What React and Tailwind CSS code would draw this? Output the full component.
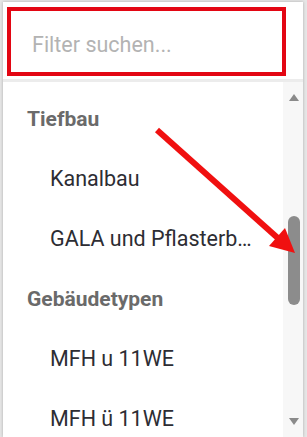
import React from "react";

const items = [
  { type: "group", label: "Tiefbau" },
  { type: "item", label: "Kanalbau" },
  { type: "item", label: "GALA und Pflasterbau" },
  { type: "group", label: "Gebäudetypen" },
  { type: "item", label: "MFH u 11WE" },
  { type: "item", label: "MFH ü 11WE" },
];

export default function App() {
  return (
    <div
      className="relative w-[307px] h-[437px] overflow-hidden bg-[#e6e6e6]"
      style={{ fontFamily: "Roboto, 'Liberation Sans', sans-serif" }}
    >
      <div className="ml-[3px] mt-[2px] w-[300px] h-[435px] bg-white flex flex-col shadow-[0_0_3px_rgba(0,0,0,0.25)]">
        <div className="h-[80px] pt-[5px] pl-[4px] border-b-[3px] border-[#ececec]">
          <div className="w-[279px] h-[69px] border-[4px] border-[#e30613] flex items-center pl-[21px] pt-[6px]">
            <span className="text-[21.5px] text-[#b3b3b3] leading-none">Filter suchen...</span>
          </div>
        </div>
        <div className="flex-1 flex min-h-0">
          <div className="flex-1 pt-[7px] overflow-hidden">
            {items.map((it, i) => (
              <div key={i} className="h-[60px] flex items-center">
                {it.type === "group" ? (
                  <span className="pl-[24px] text-[21px] font-bold text-[#6a6a6a] leading-none">
                    {it.label}
                  </span>
                ) : (
                  <span className="pl-[47px] w-[253px] truncate text-[21.5px] text-[#2d2d33] leading-[26px]">
                    {it.label}
                  </span>
                )}
              </div>
            ))}
          </div>
          <div className="w-[20px] bg-[#f7f7f7] flex flex-col items-center justify-between py-[12px]">
            <svg width="10" height="7" viewBox="0 0 10 7" className="ml-[1px]">
              <polygon points="5,0 10,7 0,7" fill="#8a8a8a" />
            </svg>
            <div className="flex-1 flex flex-col pt-[115px] pb-[113px]">
              <div className="w-[12px] flex-1 rounded-full bg-[#8c8c8c] ml-[2px]" />
            </div>
            <svg width="10" height="7" viewBox="0 0 10 7" className="ml-[1px]">
              <polygon points="0,0 10,0 5,7" fill="#8a8a8a" />
            </svg>
          </div>
        </div>
      </div>
      <svg className="absolute left-0 top-0 pointer-events-none" width="307" height="437">
        <line x1="157" y1="130" x2="280" y2="240" stroke="#f01010" strokeWidth="6" />
        <polygon points="295,253 269,246 285,228" fill="#f01010" />
      </svg>
    </div>
  );
}
